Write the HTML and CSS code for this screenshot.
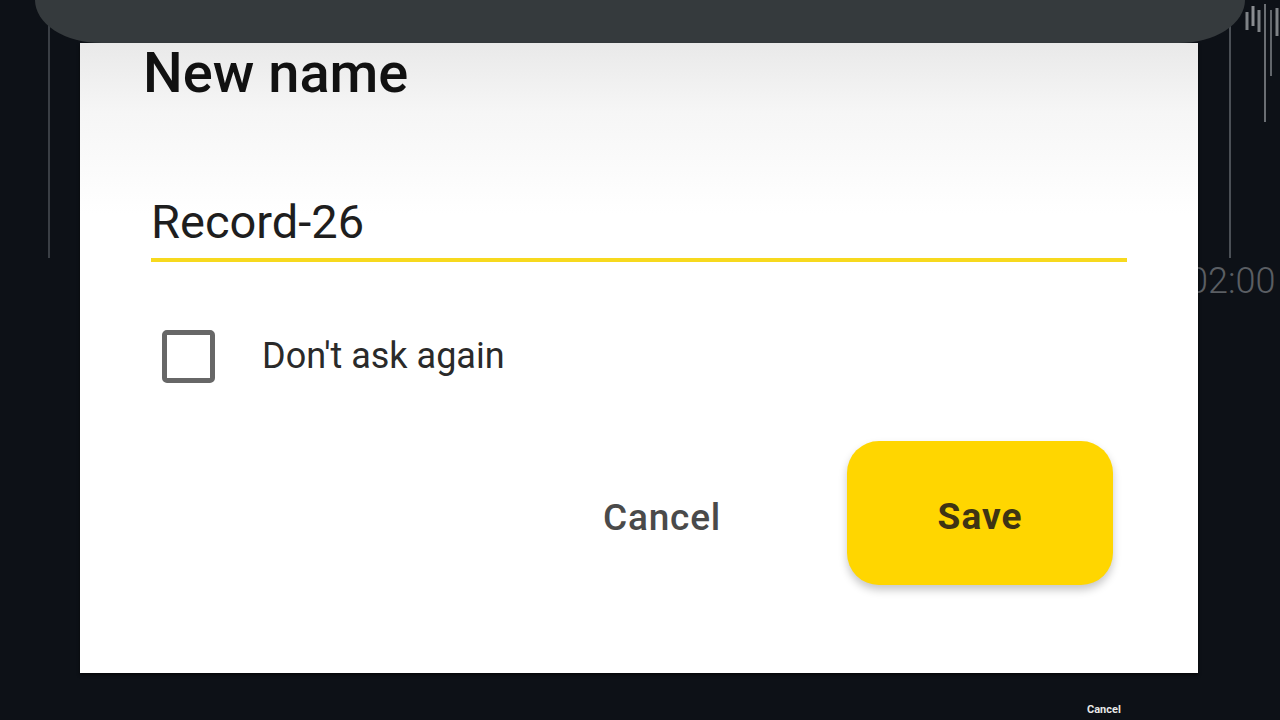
FILE: index.html
```html
<!DOCTYPE html>
<html lang="en">
<head>
    <meta charset="UTF-8">
    <meta name="viewport" content="width=device-width, initial-scale=1.0">
    <title>Rename recording</title>
    <link rel="stylesheet" href="styles.css">
</head>
<body>

    <div class="app">
        <!-- Waveform behind the dialog -->
        <div class="wave">
            <svg class="wave-left" width="10" height="260" viewBox="0 0 10 260">
                <line x1="5" y1="0" x2="5" y2="258" stroke="#3a3f45" stroke-width="2"/>
            </svg>
            <svg class="wave-right" width="60" height="262" viewBox="0 0 60 262">
                <line x1="6" y1="18" x2="6" y2="258" stroke="#4a4f55" stroke-width="2"/>
                <line x1="23" y1="12" x2="23" y2="30" stroke="#7e8286" stroke-width="3"/>
                <line x1="29" y1="6" x2="29" y2="26" stroke="#8a8d91" stroke-width="3"/>
                <line x1="35" y1="10" x2="35" y2="32" stroke="#7e8286" stroke-width="3"/>
                <line x1="41" y1="4" x2="41" y2="122" stroke="#6a6e73" stroke-width="2"/>
                <line x1="47" y1="10" x2="47" y2="76" stroke="#62666b" stroke-width="2"/>
                <line x1="53" y1="8" x2="53" y2="36" stroke="#7e8286" stroke-width="3"/>
            </svg>
            <span class="time">02:00</span>
            <span class="tiny">Cancel</span>
        </div>

        <div class="topbar"></div>

        <!-- Rename dialog -->
        <div class="dialog">
            <h2 class="title">New name</h2>

            <div class="field">Record-26</div>

            <label class="check-row">
                <span class="checkbox"></span>
                <span class="check-label">Don't ask again</span>
            </label>

            <div class="actions">
                <button class="btn-text">Cancel</button>
                <button class="btn-save">Save</button>
            </div>
        </div>
    </div>

</body>
</html>
```

FILE: styles.css
```css
body {
    margin: 0;
    background-color: #0d1117;
    font-family: Roboto, "Noto Sans", Arial, sans-serif;
    overflow: hidden;
}

.app {
    position: relative;
    width: 1280px;
    height: 720px;
}

/* waveform canvas */
.wave {
    position: absolute;
    inset: 0;
}
.wave-left {
    position: absolute;
    left: 44px;
    top: 0;
}
.wave-right {
    position: absolute;
    left: 1224px;
    top: 0;
}
.time {
    position: absolute;
    left: 1188px;
    top: 260px;
    font-size: 36px;
    font-weight: 300;
    color: #5a5e63;
}
.tiny {
    position: absolute;
    left: 1087px;
    top: 703px;
    font-size: 11px;
    font-weight: 700;
    color: #e8e8e8;
}

.topbar {
    position: relative;
    height: 43px;
    margin: 0 35px;
    background-color: #353a3d;
    border-radius: 0 0 68px 68px / 0 0 44px 44px;
}

.dialog {
    position: relative;
    display: flow-root;
    width: 1118px;
    height: 630px;
    margin-left: 80px;
    background: linear-gradient(#e9e9e9, #f6f6f6 70px, #ffffff 170px);
    box-shadow: 0 2px 3px rgba(0, 0, 0, 0.6);
}

.title {
    margin: 0;
    padding-left: 63px;
    font-size: 56px;
    line-height: 60px;
    font-weight: 500;
    color: #111111;
}

.field {
    margin: 91px 0 0 71px;
    width: 976px;
    padding-bottom: 8px;
    border-bottom: 4px solid #f7d91e;
    font-size: 47px;
    line-height: 56px;
    color: #1e1e1e;
}

.check-row {
    display: flex;
    align-items: center;
    margin: 68px 0 0 82px;
    height: 53px;
}
.checkbox {
    box-sizing: border-box;
    width: 53px;
    height: 53px;
    border: 5px solid #676767;
    border-radius: 5px;
}
.check-label {
    margin-left: 47px;
    font-size: 36px;
    line-height: 53px;
    color: #2a2a2a;
}

.actions {
    display: flex;
    justify-content: flex-end;
    align-items: center;
    margin: 58px 85px 0 0;
}
button {
    font-family: inherit;
    border: none;
    cursor: pointer;
}
.btn-text {
    background: none;
    padding: 8px 0 0;
    margin-right: 126px;
    font-size: 37px;
    font-weight: 500;
    letter-spacing: 0.8px;
    color: #4a4a4a;
}
.btn-save {
    width: 266px;
    height: 144px;
    padding-top: 7px;
    border-radius: 32px;
    background-color: #ffd600;
    box-shadow: 0 5px 8px rgba(0, 0, 0, 0.22);
    font-size: 37px;
    font-weight: 700;
    letter-spacing: 1px;
    color: #3e3414;
}
```
